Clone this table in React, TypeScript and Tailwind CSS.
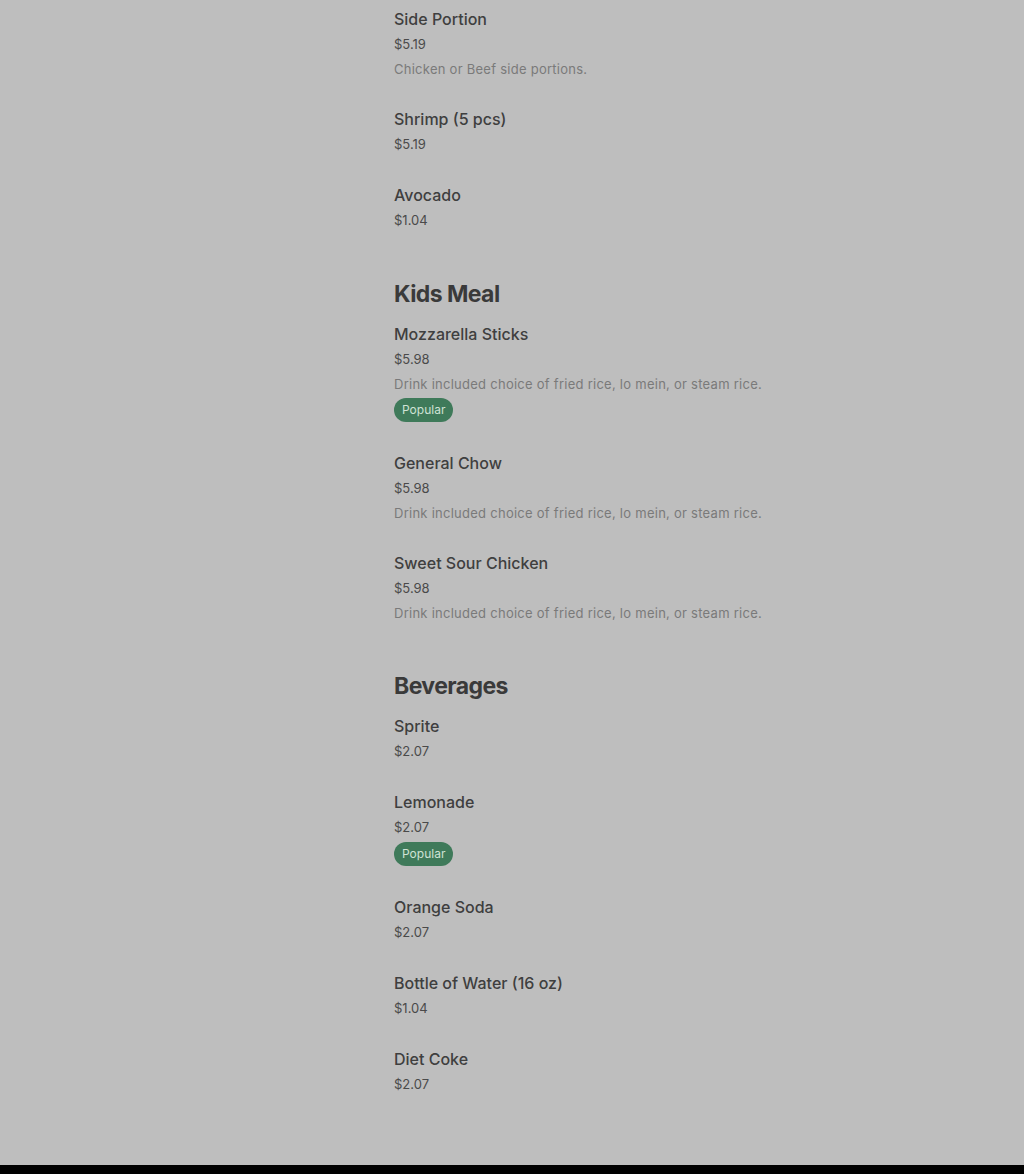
import React from "react";

type Item = { name: string; price: string; desc?: string; popular?: boolean };
type Section = { title?: string; items: Item[] };

const kidsDesc = "Drink included choice of fried rice, lo mein, or steam rice.";

const sections: Section[] = [
    {
        items: [
            { name: "Side Portion", price: "$5.19", desc: "Chicken or Beef side portions." },
            { name: "Shrimp (5 pcs)", price: "$5.19" },
            { name: "Avocado", price: "$1.04" },
        ],
    },
    {
        title: "Kids Meal",
        items: [
            { name: "Mozzarella Sticks", price: "$5.98", desc: kidsDesc, popular: true },
            { name: "General Chow", price: "$5.98", desc: kidsDesc },
            { name: "Sweet Sour Chicken", price: "$5.98", desc: kidsDesc },
        ],
    },
    {
        title: "Beverages",
        items: [
            { name: "Sprite", price: "$2.07" },
            { name: "Lemonade", price: "$2.07", popular: true },
            { name: "Orange Soda", price: "$2.07" },
            { name: "Bottle of Water (16 oz)", price: "$1.04" },
            { name: "Diet Coke", price: "$2.07" },
        ],
    },
];

function MenuItem({ item }: { item: Item }) {
    return (
        <div className="pb-[28px]">
            <div className="text-[16px] leading-[24px] font-medium text-[#3f3f3f]">{item.name}</div>
            <div className="text-[13px] leading-[24px] text-[#4a4a4a] pt-[1px] -mb-[1px]">{item.price}</div>
            {item.desc && (
                <div className="text-[13px] leading-[24px] text-[#7a7a7a] tracking-[0.02em] pt-[2px] -mb-[2px]">
                    {item.desc}
                </div>
            )}
            {item.popular && (
                <div className="mt-[2px] mb-[1px]">
                    <span className="inline-flex items-center h-6 px-2 rounded-full bg-[#3f7a5a] text-[12px] text-[#cfe2d5]">
                        Popular
                    </span>
                </div>
            )}
        </div>
    );
}

export default function App() {
    return (
        <div className="min-h-screen bg-[#bebebe] font-['Inter',sans-serif]">
            <div className="flex">
                {/* left column (empty under overlay) */}
                <aside className="w-[394px] shrink-0" />

                <main className="flex-1 pt-[7px] pb-[42px]">
                    {sections.map((section, i) => (
                        <section key={i}>
                            {section.title && (
                                <h2 className="mt-[19px] mb-[12px] text-[23px] leading-[32px] font-bold tracking-tight text-[#3a3a3a]">
                                    {section.title}
                                </h2>
                            )}
                            {section.items.map((item) => (
                                <MenuItem key={item.name} item={item} />
                            ))}
                        </section>
                    ))}
                </main>
            </div>

            {/* footer */}
            <footer className="h-[200px] bg-black" />
        </div>
    );
}
